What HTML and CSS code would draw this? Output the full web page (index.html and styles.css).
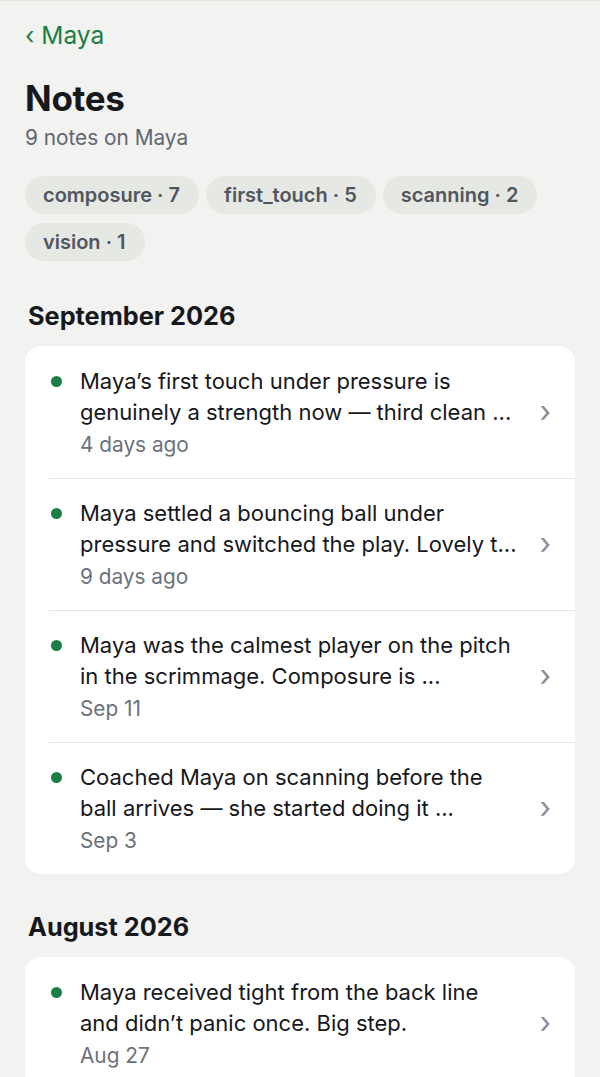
FILE: index.html
```html
<!DOCTYPE html>
<html lang="en">
<head>
    <meta charset="UTF-8">
    <meta name="viewport" content="width=device-width, initial-scale=1.0">
    <title>Notes</title>
    <link rel="stylesheet" href="styles.css">
</head>
<body>

    <a class="back-link" href="#"><span class="back-arrow">‹</span> Maya</a>

    <h1 class="page-title">Notes</h1>
    <p class="page-sub">9 notes on Maya</p>

    <div class="tag-list">
        <span class="tag">composure · 7</span>
        <span class="tag">first_touch · 5</span>
        <span class="tag">scanning · 2</span>
        <span class="tag">vision · 1</span>
    </div>

    <h2 class="month">September 2026</h2>
    <div class="card">
        <a class="note" href="#">
            <span class="dot"></span>
            <div class="note-body">
                <p class="note-text">Maya’s first touch under pressure is<br>genuinely a strength now — third clean ...</p>
                <p class="note-meta">4 days ago</p>
            </div>
            <span class="chevron">›</span>
        </a>
        <a class="note" href="#">
            <span class="dot"></span>
            <div class="note-body">
                <p class="note-text">Maya settled a bouncing ball under<br>pressure and switched the play. Lovely t...</p>
                <p class="note-meta">9 days ago</p>
            </div>
            <span class="chevron">›</span>
        </a>
        <a class="note" href="#">
            <span class="dot"></span>
            <div class="note-body">
                <p class="note-text">Maya was the calmest player on the pitch<br>in the scrimmage. Composure is ...</p>
                <p class="note-meta">Sep 11</p>
            </div>
            <span class="chevron">›</span>
        </a>
        <a class="note" href="#">
            <span class="dot"></span>
            <div class="note-body">
                <p class="note-text">Coached Maya on scanning before the<br>ball arrives — she started doing it ...</p>
                <p class="note-meta">Sep 3</p>
            </div>
            <span class="chevron">›</span>
        </a>
    </div>

    <h2 class="month month-next">August 2026</h2>
    <div class="card">
        <a class="note" href="#">
            <span class="dot"></span>
            <div class="note-body">
                <p class="note-text">Maya received tight from the back line<br>and didn’t panic once. Big step.</p>
                <p class="note-meta">Aug 27</p>
            </div>
            <span class="chevron">›</span>
        </a>
    </div>

</body>
</html>
```

FILE: styles.css
```css
body {
    background-color: #f2f2f0;
    color: #16181c;
    font-family: Inter, "Noto Sans", sans-serif;
    margin: 0;
    padding: 18px 25px 40px;
    border-top: 1px solid #e2e2df;
}

a {
    color: inherit;
    text-decoration: none;
}

.back-link {
    display: inline-block;
    color: #1a7f45;
    font-size: 24.5px;
    line-height: 32px;
}

.page-title {
    margin: 26px 0 0;
    font-size: 35px;
    line-height: 42px;
    font-weight: 700;
    letter-spacing: -0.3px;
}

.page-sub {
    margin: 5px 0 0;
    font-size: 20.8px;
    line-height: 28px;
    color: #5f6670;
}

.tag-list {
    display: flex;
    flex-wrap: wrap;
    gap: 9px 7px;
    margin-top: 24px;
}

.tag {
    background-color: #e6e8e4;
    color: #50565e;
    font-size: 20px;
    font-weight: 600;
    line-height: 38px;
    padding: 0 19px 0 18px;
    border-radius: 19px;
}

.month {
    margin: 39px 0 14px 3px;
    font-size: 25.3px;
    line-height: 32px;
    font-weight: 700;
}

.month-next {
    margin-top: 37px;
}

.card {
    background-color: #fff;
    border-radius: 16px;
    overflow: hidden;
}

.note {
    display: flex;
    align-items: center;
    padding: 20px 24px 18px;
    position: relative;
}

.note + .note::before {
    content: "";
    position: absolute;
    top: 0;
    left: 24px;
    right: 0;
    border-top: 1px solid #e4e4e2;
}

.dot {
    align-self: flex-start;
    width: 11px;
    height: 11px;
    border-radius: 50%;
    background-color: #1a7f45;
    margin: 10px 18px 0 2px;
    flex-shrink: 0;
}

.note-body {
    flex: 1;
    min-width: 0;
}

.note-text {
    margin: 0;
    font-size: 22px;
    line-height: 31px;
    white-space: nowrap;
}

.note-meta {
    margin: 2px 0 0;
    font-size: 20.8px;
    line-height: 30px;
    color: #6b717a;
}

.chevron {
    color: #8a8d93;
    font-size: 30px;
    line-height: 30px;
    margin-left: 12px;
    padding-bottom: 4px;
}
```
